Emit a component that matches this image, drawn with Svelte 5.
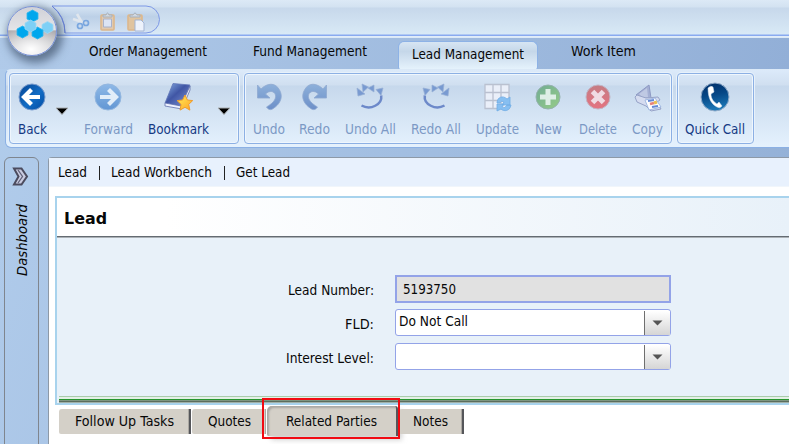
<script>
  const nav = [
    { text: 'Order Management', width: 118, box: 164 },
    { text: 'Fund Management', width: 114, box: 162 },
    { text: 'Lead Management', width: 112, box: 140, active: true },
    { text: 'Work Item', width: 65, box: 130 }
  ];
  const groups = [
    {
      width: 230, inset: 4,
      items: [
        { id: 'back', text: 'Back', width: 29, box: 36 },
        { arrow: true, box: 24 },
        { id: 'forward', text: 'Forward', width: 49, box: 68, dim: true },
        { id: 'bookmark', text: 'Bookmark', width: 61, box: 73 },
        { arrow: true, box: 17 }
      ]
    },
    {
      width: 428, inset: 2,
      items: [
        { id: 'undo', text: 'Undo', width: 32, box: 44, dim: true },
        { id: 'redo', text: 'Redo', width: 31, box: 47, dim: true },
        { id: 'undoAll', text: 'Undo All', width: 51, box: 64, dim: true },
        { id: 'redoAll', text: 'Redo All', width: 50, box: 67, dim: true },
        { id: 'update', text: 'Update', width: 43, box: 56, dim: true },
        { id: 'add', text: 'New', width: 27, box: 46, dim: true },
        { id: 'remove', text: 'Delete', width: 38, box: 54, dim: true },
        { id: 'copy', text: 'Copy', width: 31, box: 44, dim: true }
      ]
    },
    { width: 77, inset: 1, items: [{ id: 'call', text: 'Quick Call', width: 60, box: 72 }] }
  ];
  const cells = [
    { x: 24.5, y: 9 },
    { x: 39.5, y: 20.5, light: true },
    { x: 14.5, y: 25 },
    { x: 29.5, y: 26 },
    { x: 22.5, y: 19, light: true }
  ];
  const tabs = [
    { text: 'Follow Up Tasks', width: 99, box: 132 },
    { text: 'Quotes', width: 43, box: 74, plain: true },
    { text: 'Related Parties', width: 91, box: 131, active: true },
    { text: 'Notes', width: 35, box: 65 }
  ];
</script>

{#snippet label(text, width)}
  <svg class="label" width={width} height="20"><text x="0" y="15" textLength={width} lengthAdjust="spacingAndGlyphs">{text}</text></svg>
{/snippet}

{#snippet icon(id)}
  <svg class="icon" width="32" height="32" viewBox="0 0 32 32">
    {#if id === 'back' || id === 'forward'}
      <circle cx="16" cy="16" r="13" fill={id === 'back' ? 'url(#blue)' : 'url(#paleBlue)'} stroke={id === 'back' ? '#7799cc' : '#8fb4df'} />
      <path d="M15.5 8.5 8 16l7.500 7.500M9 16h15" transform={id === 'forward' ? 'translate(32 0) scale(-1 1)' : undefined} fill="none" stroke={id === 'back' ? '#fff' : '#e3effa'} stroke-width="4.200" />
    {:else if id === 'bookmark'}
      <path d="M10 2.500 27 4 18 25 2 22Z" fill="url(#book)" stroke="#6276b8" stroke-width=".8" />
      <path d="m2 22 16 3 9-20v4l-8 19L2 25Z" fill="#eef2ff" stroke="#5262a2" stroke-width=".7" />
      <path d="m22 14 2.400 5 5.300.6-4 3.800 1.200 5.700-4.900-2.800-5 2.800 1.100-5.700-4-3.800 5.500-.6Z" fill="url(#gold)" stroke="#ef9d2e" />
    {:else if id === 'undo' || id === 'redo'}
      <g transform={id === 'redo' ? 'translate(32 0) scale(-1 1)' : undefined}>
        <path d="M4.500 4v13H17l-4.500-4c4-4 9-3 10 1 1 5-4 9-9 12 2 3 4 3 6 2 8-5 11-12 7-19C22.500 1 14 2 8 8Z" fill="url(#arrowBlue)" stroke="#8ca6cf" stroke-width=".8" />
      </g>
    {:else if id === 'undoAll' || id === 'redoAll'}
      <g transform={id === 'redoAll' ? 'translate(32 0) scale(-1 1)' : undefined}>
        <path d="M7.500 24.500c9 5 21-1 19.700-10" fill="none" stroke="#6683c7" stroke-width="2.500" />
        <path d="m3 7 1 8 7-2Zm5-4 1 8 5.500-5Zm12 1-6 3 6 4Zm9 3-7 1.500 5 6Z" fill="#7396cf" stroke="#93acd4" stroke-width=".7" />
      </g>
    {:else if id === 'update'}
      <path d="M4 3.500h24v24H4ZM12 4v24M20 4v24M4 11.500h24M4 19.500h24" fill="#edf1fa" stroke="#b9bfce" stroke-width="1.300" />
      <path d="M16 22c0-6 6-8 10-4l3-2v8h-8l2-3q-3-2-4 1Zm14 2c-1 6-7 7-10 4l-4 2v-7h7l-2 3q3 2 5-2Z" fill="#82bdf2" stroke="#6ba9e5" stroke-width=".8" />
    {:else if id === 'add'}
      <circle cx="16" cy="16" r="12" fill="url(#green)" stroke="#91afaa" />
      <path d="M16 8v16M8 16h16" stroke="#e0f0e6" stroke-width="5" />
    {:else if id === 'remove'}
      <circle cx="16" cy="16" r="12" fill="url(#red)" stroke="#c2b2c1" />
      <path d="m10.500 10.500 11 11m0-11-11 11" stroke="#f3dce3" stroke-width="5" />
    {:else if id === 'copy'}
      <path d="m5 14 13-10 2 13-8 2Z" fill="#a2add2" stroke="#8995c1" />
      <path d="m8 13 8-6 1 9-5 1Z" fill="#bfc8e3" />
      <path d="m4 16 2-2 9 3 12-1 2 3-3 2 4 7-10 2-5-5-9-4Z" fill="#d6dcf0" stroke="#939fc5" />
      <path d="m14 19 10-2 6 9-12 3Z" fill="#fff" stroke="#8da9dc" stroke-width=".8" />
      <path d="m17 20 6-1M21 26l6-1" stroke="#5c82d4" stroke-width="2" /><path d="m19 23 4-1" stroke="#e87b72" stroke-width="2.500" /><path d="m23 22 3-1" stroke="#edbb45" stroke-width="3" />
    {:else if id === 'call'}
      <circle cx="16" cy="16" r="14" fill="url(#phone)" stroke="#92acc9" />
      <path d="M9 7q3-3 5-1l1 5-3 2c0 5 3 8 6 10l2-2 3 4q-2 3-5 1C12 23 9 17 9 7Z" fill="#fff" stroke="#d9e5ef" stroke-width=".5" />
    {/if}
  </svg>
{/snippet}

<div class="app">
  <svg class="defs" width="0" height="0">
    <defs>
      <linearGradient id="blue" x2="1" y2="1"><stop stop-color="#064592" /><stop offset=".55" stop-color="#126cc5" /><stop offset="1" stop-color="#004ba3" /></linearGradient>
      <linearGradient id="paleBlue" x2="0" y2="1"><stop stop-color="#8bb7e7" /><stop offset="1" stop-color="#5a91d2" /></linearGradient>
      <linearGradient id="book" x2="1" y2="1"><stop stop-color="#86aee4" /><stop offset=".45" stop-color="#4056a5" /><stop offset="1" stop-color="#8095d5" /></linearGradient>
      <linearGradient id="gold" x2="1" y2="1"><stop stop-color="#fff25b" /><stop offset="1" stop-color="#ff9f24" /></linearGradient>
      <linearGradient id="arrowBlue" x2="0" y2="1"><stop stop-color="#89add9" /><stop offset="1" stop-color="#668ac6" /></linearGradient>
      <linearGradient id="green" x2="1" y2="1"><stop stop-color="#6ba98d" /><stop offset="1" stop-color="#92cb80" /></linearGradient>
      <linearGradient id="red" x2="0" y2="1"><stop stop-color="#c5767d" /><stop offset="1" stop-color="#e66b78" /></linearGradient>
      <linearGradient id="phone" x2=".2" y2="1"><stop stop-color="#002e68" /><stop offset=".5" stop-color="#064887" /><stop offset="1" stop-color="#1b77b6" /></linearGradient>
      <linearGradient id="cap" x2="0" y2="1"><stop stop-color="#d6e5f4" /><stop offset=".4" stop-color="#bcd0e7" /><stop offset="1" stop-color="#d4e3f3" /></linearGradient>
    </defs>
  </svg>

  <header>
    <svg class="quick" width="112" height="30" viewBox="0 0 112 30">
      <path d="M2 1h94a13.500 13.500 0 0 1 0 27H15Q15 12 2 1Z" fill="url(#cap)" stroke="#7d98e6" />
      <path d="M2 1q13 10 13 27" fill="none" stroke="#6c85df" />
      <path d="m27 9 7 12m-11-7 12 4" stroke="#e0e6ed" stroke-width="2.600" />
      <circle cx="30" cy="21" r="2.500" fill="none" stroke="#79a6df" stroke-width="1.700" /><circle cx="36" cy="18" r="2.500" fill="none" stroke="#79a6df" stroke-width="1.700" />
      <rect x="51" y="10" width="13" height="15" rx="1" fill="#e1c9af" stroke="#dcb78c" stroke-width="1.600" /><path d="M53.500 14h8v8h-8Z" fill="#dce4f4" stroke="#a8b2cb" /><path d="M53 12v-2h3q1.500-4 3 0h3v2Z" fill="#d2d8e0" stroke="#a5b0bd" />
      <rect x="78" y="10" width="14" height="15" rx="1" fill="#e0c49f" stroke="#dcb78c" stroke-width="1.600" /><path d="M80 12v-2h3q2-4 4 0h3v2Z" fill="#d2d8e0" stroke="#a5b0bd" /><path d="M85 15h6l3 3v8h-9Z" fill="#edf2fb" stroke="#a3b5d4" />
    </svg>
    <div class="orb">
      <svg width="48" height="48" viewBox="0 0 48 48">
        {#each cells as cell}
          <path d="m0-6 5.500 3v6L0 6-5.500 3v-6Z" transform="translate({cell.x} {cell.y})" fill={cell.light ? '#7ed0f6' : '#00a7ed'} stroke={cell.light ? '#a0d8f4' : '#2db6ee'} stroke-width=".8" stroke-linejoin="round" />
        {/each}
      </svg>
    </div>
  </header>

  <nav>
    {#each nav as item}
      <div class="nav-item" class:active={item.active} style="width:{item.box}px">{@render label(item.text, item.width)}</div>
    {/each}
  </nav>

  <section class="ribbon">
    {#each groups as group}
      <div class="group" style="width:{group.width}px;padding-left:{group.inset}px">
        {#each group.items as item}
          <div class="tool" class:dim={item.dim} style="width:{item.box}px">
            {#if item.arrow}
              <svg class="drop" width="14" height="8"><path d="M1 1h12L7 7.500Z" fill="#000" stroke="#a9adb0" stroke-width="1" /></svg>
            {:else}
              {@render icon(item.id)}
              {@render label(item.text, item.width)}
            {/if}
          </div>
        {/each}
      </div>
    {/each}
  </section>

  <div class="workspace">
    <aside>
      <svg width="20" height="22" viewBox="0 0 20 22"><path d="M3 2.500h7.500l5.500 8-5.500 8H3l4.500-8Z" fill="#c9cbe0" stroke="#4b4b5e" stroke-width="2" /><path d="m7 4 4.500 6.500L7 17" fill="none" stroke="#5f6078" stroke-width="1.300" /></svg>
      <svg class="vertical" width="20" height="76"><text transform="translate(16 74) rotate(-90)" textLength="72" lengthAdjust="spacingAndGlyphs">Dashboard</text></svg>
    </aside>
    <main>
      <div class="crumbs">
        {@render label('Lead', 29)}<i></i>{@render label('Lead Workbench', 101)}<i></i>{@render label('Get Lead', 54)}
      </div>
      <section class="panel">
        <h1>{@render label('Lead', 43)}</h1>
        <div class="form">
          <div class="row"><span class="name">{@render label('Lead Number:', 86)}</span><div class="field readonly">{@render label('5193750', 53)}</div></div>
          <div class="row"><span class="name">{@render label('FLD:', 29)}</span><div class="field">{@render label('Do Not Call', 69)}<span class="select"><svg width="11" height="6"><path d="M.5.5h10L5.500 5.500Z" fill="#555" /></svg></span></div></div>
          <div class="row"><span class="name">{@render label('Interest Level:', 88)}</span><div class="field"><span class="select"><svg width="11" height="6"><path d="M.5.5h10L5.500 5.500Z" fill="#555" /></svg></span></div></div>
        </div>
        <div class="rule"></div>
      </section>
      <div class="tabs">
        {#each tabs as tab}
          <div class="tab" class:plain={tab.plain} class:selected={tab.active} style="width:{tab.box}px">{@render label(tab.text, tab.width)}</div>
        {/each}
        <div class="highlight"></div>
      </div>
    </main>
  </div>
</div>

<style>
  * { box-sizing: border-box; }
  .app { width: 789px; height: 444px; overflow: hidden; display: flex; flex-direction: column; background: linear-gradient(110deg, #b2cdec, #91aed5); font-family: "DejaVu Sans Condensed", "DejaVu Sans", sans-serif; font-size: 14px; color: #080808; }
  svg { display: block; flex: none; overflow: visible; }
  .defs { position: absolute; }
  header { height: 38px; flex: none; position: relative; background: linear-gradient(#dce9f6 0, #d3e2f1 7px, #c7d8eb 8px, #d8e9f6 34px, #89aaf0 35px, #89aaf0 36px, #e4effa 36px, #d8e7f6 38px); padding: 5px 0 0 50px; }
  .orb { position: absolute; z-index: 2; left: 7px; top: 6px; width: 50px; height: 50px; border: 1px solid #7890d4; border-radius: 50%; background: radial-gradient(ellipse 75% 50% at 48% 88%, #fff 0, #fff0 100%), linear-gradient(#d0d1d8, #e4e4e7 47%, #aaa9ad 50%, #cfcfd1); box-shadow: 3px 4px 9px 3px #465873bb; }
  nav { height: 31px; flex: none; display: flex; padding: 3px 0 0 66px; background: linear-gradient(100deg, #b0cae9, #92afd7); }
  .nav-item { display: flex; justify-content: center; align-items: flex-start; }
  .nav-item:nth-child(2) { padding-right: 2px; }
  .active { margin-left: 6px; padding-top: 2px; border: 1px solid #8db2e6; border-bottom: 0; border-radius: 6px 6px 2px 2px; background: linear-gradient(#d7e5f3, #c5d7e9 35%, #e5f2fc); }
  .ribbon { width: 790px; height: 79px; flex: none; margin-left: 5px; border: 1px solid #8bb0e4; border-top-color: #dbe9f7; border-radius: 6px; display: flex; gap: 5px; padding: 3px; background: linear-gradient(#dceafa 0, #d0dff0 15px, #c6d8ec 16px, #e4f1fd 76px); }
  .group { height: 71px; flex: none; border: 1px solid #8cb0e4; border-radius: 4px; display: flex; box-shadow: inset 0 0 0 1px #eff6fd, 0 0 0 1px #e7f1fb; }
  .tool { flex: none; display: flex; flex-direction: column; align-items: center; padding-top: 7px; color: #153a84; }
  .icon { margin-bottom: 6px; }
  .drop { margin-top: 26px; }
  .dim { color: #7c99c5; }
  .dim .icon { opacity: .93; }
  .label text, .vertical text { fill: currentColor; }
  .workspace { flex: 1; min-height: 0; display: flex; padding: 9px 0 0 4px; }
  aside { width: 35px; height: 310px; flex: none; border: 1px solid #7f858e; border-radius: 6px; padding: 8px 0 0 6px; }
  .vertical { margin-top: 14px; font-style: italic; }
  main { margin-left: 9px; flex: 1; min-width: 0; background: #fff; border: 1px solid #8d99a7; border-width: 1px 0 0 1px; border-radius: 4px 0 0; display: flex; flex-direction: column; }
  .crumbs { height: 29px; flex: none; display: flex; padding: 4px 0 0 9px; background: #e8f1fd; border-bottom: 1px solid #f1f6fb; }
  .crumbs i { width: 1px; height: 14px; background: #222; margin: 4px 11px 0 12px; }
  .panel { margin: 9px 0 0 6px; height: 209px; flex: none; border: 2px solid #a8d3ed; border-right: 0; background: #e8f1f9; display: flex; flex-direction: column; }
  h1 { margin: 0; height: 39px; flex: none; padding: 11px 0 0 7px; font: bold 16px "DejaVu Sans", sans-serif; background: linear-gradient(90deg, #fff 0, #fff 15%, #e8f1f9); border-bottom: 1px solid #646b72; box-shadow: 0 1px #abb1b6; }
  .form { display: flex; flex-direction: column; gap: 7px; padding-top: 38px; }
  .row { display: flex; height: 27px; }
  .name { width: 317px; margin-right: 21px; display: flex; justify-content: flex-end; padding-top: 5px; }
  .field { width: 276px; height: 27px; border: 1px solid #93a3e8; border-radius: 3px; background: #fff; padding: 1px 0 0 3px; display: flex; justify-content: space-between; }
  .readonly { height: 28px; border: 2px solid #93a3e8; border-radius: 0; background: #e1e1e1; padding: 2px 0 0 6px; }
  .select { width: 26px; height: 24px; margin: 0 0 0 auto; border-left: 1px solid #6f6f6f; background: linear-gradient(#fff, #d5d5d5); display: flex; align-items: center; justify-content: center; }
  .rule { height: 7px; flex: none; margin: auto 0 0 2px; background: linear-gradient(#a9cdaa 0 1px, #e6eee9 1px 2px, #e2f3e3 2px 3px, #27942f 3px 4px, #7d9580 4px 5px, #5b6d5e 5px 6px, #a1b1a8 6px 7px); }
  .tabs { position: relative; display: flex; align-items: flex-start; margin: 4px 0 0 10px; }
  .tab { height: 25px; flex: none; display: flex; justify-content: center; padding-top: 2px; background: #d4d0c8; border-right: 2px solid #55565a; border-radius: 3px 0 0 2px; box-shadow: inset -1px 0 #aba8a2; }
  .tab + .tab { margin-left: 1px; }
  .tab:last-of-type { padding-right: 1px; }
  .plain { border-right: 0; }
  .tab.selected { margin-top: -3px; height: 30px; padding-top: 5px; border-radius: 5px 3px 0 2px; box-shadow: inset 2px 2px 2px #aaa8a4, 4px 4px 5px #aaa8; }
  .highlight { position: absolute; left: 203px; top: -11px; width: 138px; height: 41px; border: 2px solid #f10b12; }
</style>
